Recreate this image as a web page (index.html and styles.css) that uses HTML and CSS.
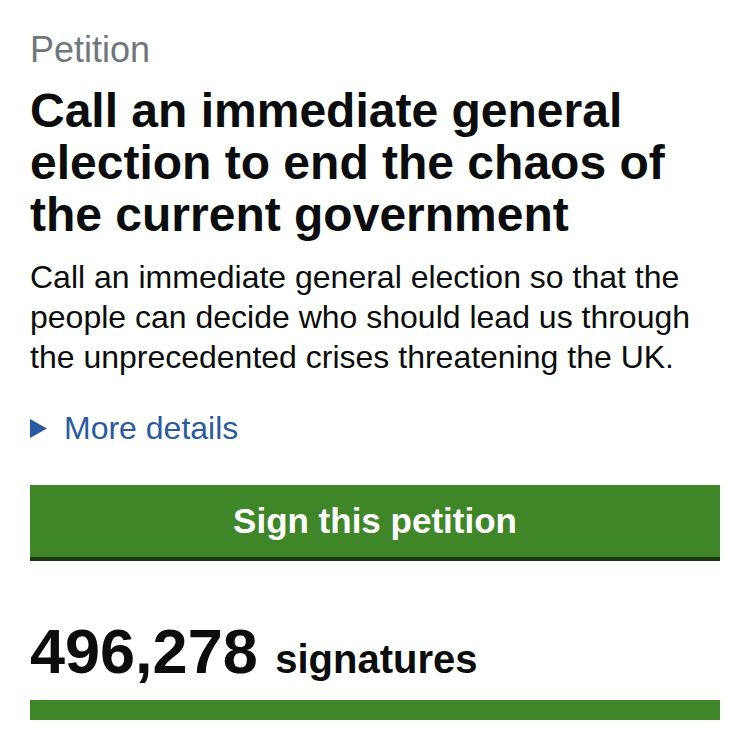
FILE: index.html
```html
<!DOCTYPE html>
<html lang="en">
<head>
<meta charset="utf-8">
<title>Petition</title>
<link rel="stylesheet" href="styles.css">
</head>
<body>
<main class="page">
  <p class="caption">Petition</p>
  <h1 class="title">Call an immediate general election to end the chaos of the current government</h1>
  <p class="summary">Call an immediate general election so that the people can decide who should lead us through the unprecedented crises threatening the UK.</p>
  <details class="more">
    <summary class="more-toggle">
      <svg class="arrow" width="17" height="19" viewBox="0 0 17 19" aria-hidden="true"><polygon points="0,0 17,9.5 0,19"/></svg>
      <span class="more-text">More details</span>
    </summary>
  </details>
  <a class="sign-btn" href="#">Sign this petition</a>
  <p class="count"><span class="count-num">496,278</span> <span class="count-label">signatures</span></p>
  <div class="progress"><div class="progress-fill" style="width:100%"></div></div>
</main>
</body>
</html>
```

FILE: styles.css
```css
html, body {
  margin: 0;
  padding: 0;
  background: #ffffff;
}

body {
  font-family: "Liberation Sans", Arial, Helvetica, sans-serif;
  color: #0b0c0c;
}

.page {
  padding: 30px 30px 0 30px;
}

.caption {
  margin: 0;
  font-size: 36px;
  line-height: 40px;
  color: #6f777b;
}

.title {
  margin: 15px 0 0 0;
  font-size: 48px;
  line-height: 52px;
  font-weight: 700;
  color: #0b0c0c;
}

.summary {
  margin: 16px 0 0 0;
  font-size: 32px;
  line-height: 40px;
}

.more {
  margin-top: 31px;
}

.more-toggle {
  list-style: none;
  display: flex;
  align-items: center;
  gap: 17px;
  font-size: 32px;
  line-height: 40px;
  color: #2a5a9f;
  cursor: pointer;
}

.more-toggle::-webkit-details-marker {
  display: none;
}

.arrow {
  fill: #2a5a9f;
  flex: none;
  margin-top: 1px;
}

.sign-btn {
  display: block;
  margin-top: 37px;
  height: 72px;
  line-height: 72px;
  background: #3e8628;
  border-bottom: 4px solid #1a3a10;
  color: #ffffff;
  text-align: center;
  text-decoration: none;
  font-size: 35px;
  font-weight: 700;
}

.count {
  margin: 55px 0 0 0;
  font-size: 63px;
  line-height: 70px;
  font-weight: 700;
  color: #0b0c0c;
}

.count-label {
  font-size: 40px;
  line-height: 1;
}

.progress {
  margin-top: 14px;
  height: 20px;
  background: #ffffff;
}

.progress-fill {
  height: 100%;
  background: #3e8628;
}
```
